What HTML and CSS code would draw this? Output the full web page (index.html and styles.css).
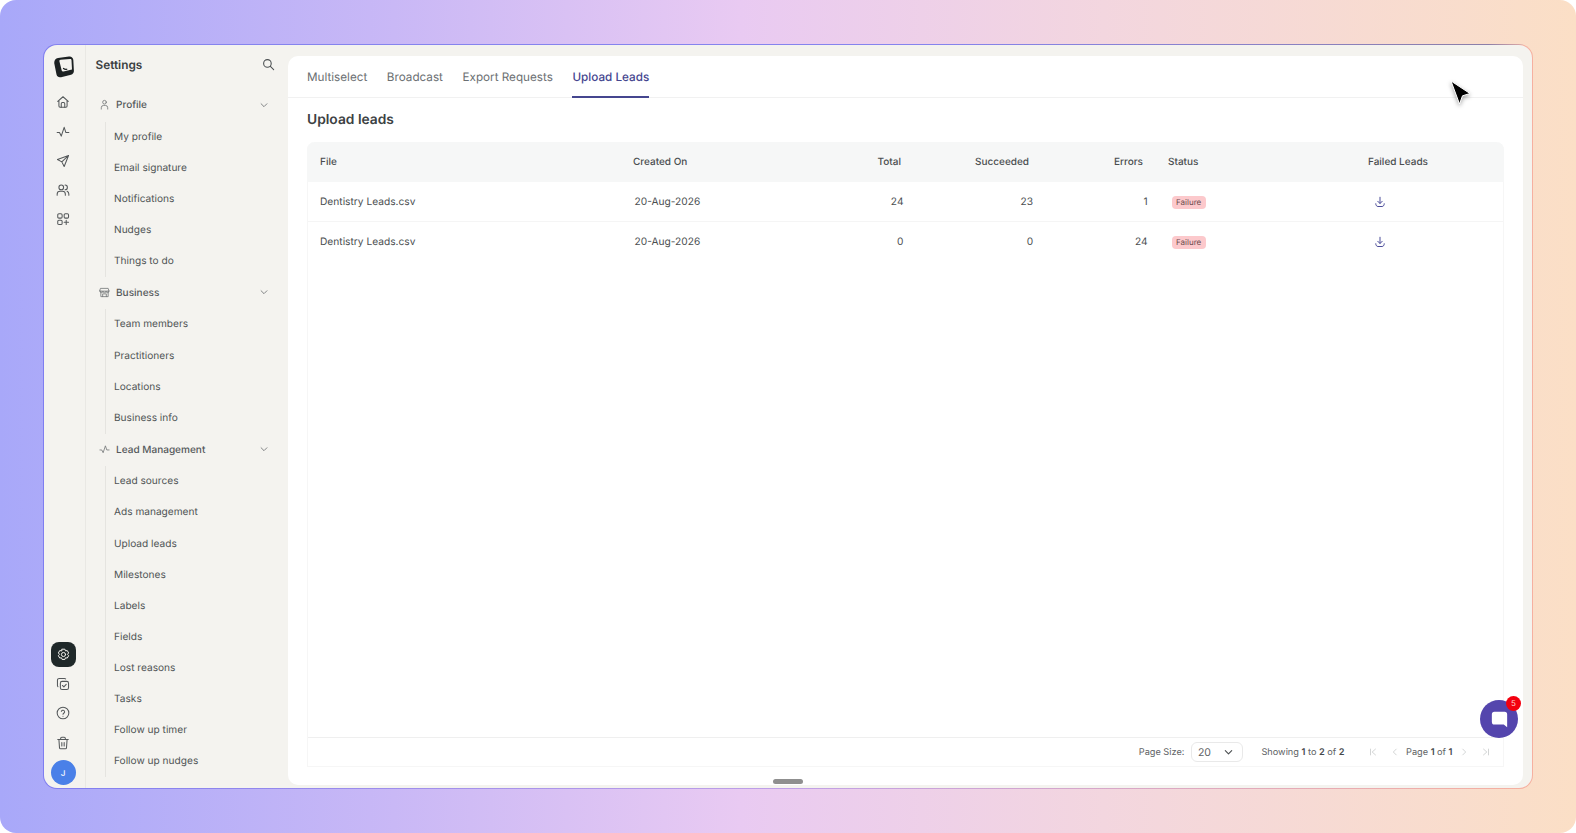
FILE: index.html
```html
<!DOCTYPE html>
<html lang="en">
<head>
<meta charset="utf-8">
<title>Upload Leads</title>
<link rel="stylesheet" href="styles.css">
</head>
<body>
<div class="stage">
<div class="window">
  <nav class="rail">
    <div class="rail-group">
      <svg class="logo" viewBox="0 0 20 22"><path d="M4 2 15 .6c2.200-.3 4 1 4.300 3.200l.6 11c.1 2-1 3.400-2.900 3.900L7 21.200c-2.200.5-3.900-.5-4.500-2.600L.3 7.500C-.1 4.700 1.500 2.400 4 2z" fill="#1c2122"/><path d="M6.500 3.800 16 2.900c.9-.1 1.400.4 1.500 1.200l.5 9.300-8.500 2.100c-1 .2-1.600-.2-1.800-1L5.400 5.200c-.1-.8.300-1.300 1.100-1.400z" fill="#f4f3ef"/><path d="M9.500 12.500c1.100.9 2.200 1.100 3.300.7" fill="none" stroke="#1c2122" stroke-width="1.200" stroke-linecap="round"/></svg>
      <svg class="ri" viewBox="0 0 24 24"><path d="M3 11 12 3l9 8M5 9.500V19a2 2 0 0 0 2 2h10a2 2 0 0 0 2-2V9.500"/><path d="M9 21v-6a2 2 0 0 1 2-2h2a2 2 0 0 1 2 2v6"/></svg>
      <svg class="ri" viewBox="0 0 24 24"><path d="M2 13h4l3 6 5-15 3 9h5"/></svg>
      <svg class="ri" viewBox="0 0 24 24"><path d="M21.500 2.500 2.500 9.500l7.500 4 4 8zM10 13.500l11.500-11"/></svg>
      <svg class="ri" viewBox="0 0 24 24"><circle cx="9" cy="7.500" r="4"/><path d="M2 21v-2a5 5 0 0 1 5-5h4a5 5 0 0 1 5 5v2M15.500 3.500a4 4 0 0 1 0 8M19 14.300a5 5 0 0 1 3 4.700v2"/></svg>
      <svg class="ri" viewBox="0 0 24 24"><rect x="3" y="3" width="7.500" height="7.500" rx="2"/><rect x="14" y="3" width="7.500" height="7.500" rx="2"/><rect x="3" y="14" width="7.500" height="7.500" rx="2"/><path d="M17.500 14v7.500M14 17.700h7.500"/></svg>
    </div>
    <div class="rail-group rail-bottom">
      <span class="rail-active"><svg class="ri ri-light" viewBox="0 0 24 24"><path d="M9.800 2.300h4.400l1 2.700 2.800-.5 2.200 3.800-1.800 2.200 1.800 2.200-2.200 3.800-2.800-.5-1 2.700H9.800l-1-2.700-2.800.5-2.200-3.800 1.800-2.200-1.800-2.200L6 4.500l2.800.5z" transform="translate(0 1.200)"/><circle cx="12" cy="12" r="3.300"/></svg></span>
      <svg class="ri" viewBox="0 0 24 24"><rect x="7.500" y="7.500" width="14" height="14" rx="3"/><path d="M16.500 3.300A3 3 0 0 0 14.500 2.500H5.500a3 3 0 0 0-3 3v9a3 3 0 0 0 .8 2M11 14.500l2.500 2.500 4-4.500"/></svg>
      <svg class="ri" viewBox="0 0 24 24"><circle cx="12" cy="12" r="10"/><path d="M9.200 9.200a2.900 2.900 0 0 1 5.600 1c0 1.900-2.800 2.400-2.800 4M12 17.500v.1"/></svg>
      <svg class="ri" viewBox="0 0 24 24"><path d="M3 6h18M8 6V4a2 2 0 0 1 2-2h4a2 2 0 0 1 2 2v2M5 6l1 14a2 2 0 0 0 2 2h8a2 2 0 0 0 2-2l1-14M10 11v6M14 11v6"/></svg>
      <span class="avatar">J</span>
    </div>
  </nav>

  <aside class="side">
    <div class="side-head">
      <span class="side-title">Settings</span>
      <svg class="search" viewBox="0 0 24 24"><circle cx="10" cy="10" r="7"/><path d="m15.500 15.500 6 6"/></svg>
    </div>

    <div class="sec-head">
      <svg class="sec-icon" viewBox="0 0 24 24"><circle cx="12" cy="7" r="4"/><path d="M5 22v-3a5 5 0 0 1 5-5h4a5 5 0 0 1 5 5v3"/></svg>
      <span class="sec-label">Profile</span>
      <svg class="chev" viewBox="0 0 24 24"><path d="m5 9 7 7 7-7"/></svg>
    </div>
    <ul class="sub">
      <li>My profile</li><li>Email signature</li><li>Notifications</li><li>Nudges</li><li>Things to do</li>
    </ul>

    <div class="sec-head">
      <svg class="sec-icon" viewBox="0 0 24 24"><path d="M4 3h16l2 6H2zM4 9v12h16V9M2 9a3.300 3.300 0 0 0 6.600 0 3.400 3.400 0 0 0 6.800 0 3.300 3.300 0 0 0 6.600 0M8 21v-6h8v6"/></svg>
      <span class="sec-label">Business</span>
      <svg class="chev" viewBox="0 0 24 24"><path d="m5 9 7 7 7-7"/></svg>
    </div>
    <ul class="sub">
      <li>Team members</li><li>Practitioners</li><li>Locations</li><li>Business info</li>
    </ul>

    <div class="sec-head">
      <svg class="sec-icon" viewBox="0 0 24 24"><path d="M2 13h4l3 6 5-15 3 9h5"/></svg>
      <span class="sec-label">Lead Management</span>
      <svg class="chev" viewBox="0 0 24 24"><path d="m5 9 7 7 7-7"/></svg>
    </div>
    <ul class="sub">
      <li>Lead sources</li><li>Ads management</li><li>Upload leads</li><li>Milestones</li><li>Labels</li><li>Fields</li><li>Lost reasons</li><li>Tasks</li><li>Follow up timer</li><li>Follow up nudges</li>
    </ul>
  </aside>

  <main class="panel">
    <div class="tabs">
      <span class="tab">Multiselect</span>
      <span class="tab">Broadcast</span>
      <span class="tab">Export Requests</span>
      <span class="tab tab-active">Upload Leads</span>
    </div>
    <div class="content">
      <h1 class="page-title">Upload leads</h1>
      <div class="grid">
        <div class="row row-head">
          <span class="c-file">File</span>
          <span class="c-date">Created On</span>
          <span class="c-total">Total</span>
          <span class="c-succ">Succeeded</span>
          <span class="c-err">Errors</span>
          <span class="c-status">Status</span>
          <span class="c-failed">Failed Leads</span>
        </div>
        <div class="row row-body">
          <span class="c-file">Dentistry Leads.csv</span>
          <span class="c-date cell-date">20-Aug-2026</span>
          <span class="c-total">24</span>
          <span class="c-succ">23</span>
          <span class="c-err">1</span>
          <span class="c-status"><span class="badge">Failure</span></span>
          <span class="c-failed cell-dl"><svg class="dl" viewBox="0 0 24 24"><path d="M12 2.500v12M7.500 10.500l4.500 4.500 4.500-4.500M3.500 15.500c0 3.500 2 5.500 4.500 5.500h8c2.500 0 4.500-2 4.500-5.500"/></svg></span>
        </div>
        <div class="row row-body">
          <span class="c-file">Dentistry Leads.csv</span>
          <span class="c-date cell-date">20-Aug-2026</span>
          <span class="c-total">0</span>
          <span class="c-succ">0</span>
          <span class="c-err">24</span>
          <span class="c-status"><span class="badge">Failure</span></span>
          <span class="c-failed cell-dl"><svg class="dl" viewBox="0 0 24 24"><path d="M12 2.500v12M7.500 10.500l4.500 4.500 4.500-4.500M3.500 15.500c0 3.500 2 5.500 4.500 5.500h8c2.500 0 4.500-2 4.500-5.500"/></svg></span>
        </div>
        <div class="grid-fill"></div>
        <div class="pager">
          <span class="pg-label">Page Size:</span>
          <span class="pg-select">20<svg class="pg-chev" viewBox="0 0 24 24"><path d="m5 8 7 7 7-7"/></svg></span>
          <span class="pg-count">Showing <b>1</b> to <b>2</b> of <b>2</b></span>
          <span class="pg-nav">
            <svg class="pg-btn" viewBox="0 0 24 24"><path d="M6 5v14M18 5l-8 7 8 7"/></svg>
            <svg class="pg-btn" viewBox="0 0 24 24"><path d="m15 5-7 7 7 7"/></svg>
            <span class="pg-page">Page <b>1</b> of <b>1</b></span>
            <svg class="pg-btn" viewBox="0 0 24 24"><path d="m9 5 7 7-7 7"/></svg>
            <svg class="pg-btn" viewBox="0 0 24 24"><path d="M18 5v14M6 5l8 7-8 7"/></svg>
          </span>
        </div>
      </div>
    </div>
    <span class="handle"></span>
  </main>

  <div class="chat">
    <svg class="chat-icon" viewBox="0 0 20 20"><path d="M4 1h12a3 3 0 0 1 3 3v15l-4-3H4a3 3 0 0 1-3-3V4a3 3 0 0 1 3-3z"/></svg>
    <span class="chat-badge">5</span>
  </div>
  <svg class="cursor" viewBox="0 0 24 28"><path d="M2 1 21 13.500l-7.500 2.300L10.500 24z"/></svg>
</div>
</div>
</body>
</html>
```
FILE: styles.css
```css
* { box-sizing: border-box; }
html, body { margin: 0; height: 100%; background: #fff; }
body { font-family: Inter, "Liberation Sans", sans-serif; color: #45494b; overflow: hidden; text-rendering: geometricPrecision; }
svg { display: block; flex: none; }

.stage {
  width: 1576px; height: 833px;
  padding: 44px 43px;
  background: linear-gradient(90deg, #a8a8f9 0%, #c9b8f6 25%, #e9caf2 47%, #f3d6df 70%, #fbdfc6 100%);
  border-radius: 16px;
}
.window {
  position: relative;
  display: flex;
  height: 745px;
  border: 1px solid transparent;
  background:
    linear-gradient(#f4f3ef, #f4f3ef) padding-box,
    linear-gradient(90deg, #8583ee 0%, #8583ee 60%, #8c7fa8 97%, #f6b6a4 100%) top / 100% 1px no-repeat border-box,
    linear-gradient(90deg, #7f7df0 0%, #bfa0e6 50%, #f6b0a0 100%) border-box;
  border-radius: 14px;
  overflow: hidden;
}

/* icon rail */
.rail {
  width: 42px; flex: none;
  display: flex; flex-direction: column; justify-content: space-between; align-items: center;
  padding: 11px 3px 3px 0;
  border-right: 1px solid #e9e8e4;
}
.rail-group { display: flex; flex-direction: column; align-items: center; gap: 15.300px; }
.logo { width: 20px; height: 22px; margin: 0 0 2px 2px; }
.ri { width: 14px; height: 14px; fill: none; stroke: #55595b; stroke-width: 1.800; stroke-linecap: round; stroke-linejoin: round; }
.ri-light { stroke: #f4f3ef; width: 15px; height: 15px; stroke-width: 1.600; }
.rail-active {
  width: 25px; height: 25px; border-radius: 8px; background: #1f2829;
  display: flex; align-items: center; justify-content: center;
  margin-bottom: -5px;
}
.avatar {
  width: 25px; height: 25px; border-radius: 50%; background: #4a80e8; color: #e8eefc;
  display: flex; align-items: center; justify-content: center;
  font-size: 8px; font-weight: 600; margin-top: -5px;
}

/* settings sidebar */
.side { width: 202px; flex: none; padding: 0 13px 0 9.500px; overflow: hidden; }
.side-head { height: 39px; display: flex; align-items: center; justify-content: space-between; }
.side-title { font-size: 11.800px; font-weight: 600; color: #3a3f41; }
.search { width: 13px; height: 13px; fill: none; stroke: #4b5052; stroke-width: 2; stroke-linecap: round; }
.sec-head { height: 31px; display: flex; align-items: center; padding-left: 3px; }
.side-head + .sec-head { margin-top: 5px; }
.sec-icon { width: 11px; height: 11px; fill: none; stroke: #74787a; stroke-width: 1.800; stroke-linecap: round; stroke-linejoin: round; margin-right: 6.500px; }
.sec-label { flex: 1; font-size: 10.050px; font-weight: 500; color: #55595b; padding-top: 1px; }
.chev { width: 10px; height: 10px; fill: none; stroke: #6b6f71; stroke-width: 2; stroke-linecap: round; stroke-linejoin: round; margin-right: 6px; }
.sub { list-style: none; margin: 1.500px 0 0 9.500px; padding: 0 0 0 8px; border-left: 1px solid #e5e4e0; }
.sub li { height: 31.100px; line-height: 31.100px; font-size: 10.150px; color: #4f5355; }

/* main panel */
.panel {
  position: relative; flex: 1; min-width: 0;
  margin: 11px 9px 3px 0;
  background: #fff; border-radius: 10px;
  display: flex; flex-direction: column;
  overflow: hidden;
}
.tabs {
  height: 42px; flex: none; display: flex; gap: 19.600px; padding: 0 19px;
  border-bottom: 1.500px solid #f1f1f1;
}
.tab { height: 42px; line-height: 42px; font-size: 11.700px; color: #6b6f72; }
.tab-active { color: #45468f; font-weight: 500; border-bottom: 2px solid #45468f; }
.content { flex: 1; min-height: 0; display: flex; flex-direction: column; padding: 0 19px 18px; }
.page-title { margin: 0; height: 44px; line-height: 44px; font-size: 13.800px; font-weight: 600; color: #3c4143; }

.grid { flex: 1; min-height: 0; display: flex; flex-direction: column; border: 1px solid #f6f6f6; border-top: 0; border-radius: 8px 8px 0 0; }
.row { display: flex; align-items: center; flex: none; }
.row-head { height: 40px; font-size: 10px; background: #f6f7f7; border-radius: 8px 8px 0 0; font-weight: 500; color: #4a4e50; margin: 0 -1px; padding: 0 1px; }
.row-body { height: 40px; font-size: 10.200px; color: #4a4e50; border-bottom: 1px solid #f5f5f5; padding-top: 1px; }
.row-body:nth-child(3) { height: 39px; border-bottom: 0; }

.row > span { display: block; }
.c-file { width: 325px; padding-left: 12px; }
.c-date { width: 140px; }
.c-total { width: 128px; text-align: right; }
.c-succ { width: 128px; text-align: right; }
.c-err { width: 114px; text-align: right; }
.c-status { width: 225px; padding-left: 25px; }
.c-failed { flex: 1; }
.cell-date { padding-left: 1.500px; }
.row-body .c-total { width: 130.500px; }
.row-body .c-succ { width: 129.600px; }
.row-body .c-err { width: 114.600px; }
.row-body .c-status { width: 220.200px; padding-left: 24px; }
.badge { display: block; width: 34px; height: 13px; line-height: 13px; text-align: center; border-radius: 4px; background: #fcc9cc; color: #6a4a4d; font-size: 8px; }
.cell-dl { padding-left: 6px; }
.dl { width: 12px; height: 12px; fill: none; stroke: #4b4c99; stroke-width: 2; stroke-linecap: round; stroke-linejoin: round; }

.grid-fill { flex: 1; border-bottom: 1px solid #efefef; }
.pager { height: 28px; flex: none; display: flex; align-items: center; justify-content: flex-end; padding-right: 12px; font-size: 9.200px; color: #5e6264; }
.pager b { font-weight: 600; color: #45494b; }
.pg-label { margin-right: 6.500px; }
.pg-select {
  width: 52px; height: 20px; display: flex; align-items: center; justify-content: space-between;
  padding: 0 8px 0 6px; border: 1px solid #e9e9e9; border-radius: 6px; margin-right: 18.500px; font-size: 10.500px;
}
.pg-chev { width: 11px; height: 11px; fill: none; stroke: #4a4e50; stroke-width: 2.400; stroke-linecap: round; stroke-linejoin: round; }
.pg-nav { display: flex; align-items: center; margin-left: 23px; }
.pg-btn { width: 10px; height: 10px; fill: none; stroke: #c4c6c7; stroke-width: 1.800; stroke-linecap: round; stroke-linejoin: round; }
.pg-btn:first-child { margin-right: 12.500px; }
.pg-btn:last-child { margin-left: 12.500px; }
.pg-page { margin: 0 6px; }

.handle { position: absolute; left: 485px; bottom: 1px; width: 30px; height: 5px; background: #8f8f8f; border-radius: 3px; }

/* overlays */
.chat {
  position: absolute; right: 14px; top: 655px; width: 38px; height: 38px; border-radius: 50%;
  background: #5445ad; display: flex; align-items: center; justify-content: center;
}
.chat-icon { width: 17px; height: 17px; fill: #fff; }
.chat-badge {
  position: absolute; right: -3px; top: -4px; width: 15px; height: 15px; border-radius: 50%;
  background: #f3000f; color: #ffd0d0; font-size: 8px; line-height: 15px; text-align: center;
}
.cursor { position: absolute; left: 1405px; top: 35px; width: 24px; height: 28px; fill: #000; stroke: #fff; stroke-width: 1; filter: drop-shadow(0 2px 2px rgba(0,0,0,.35)); }
```
